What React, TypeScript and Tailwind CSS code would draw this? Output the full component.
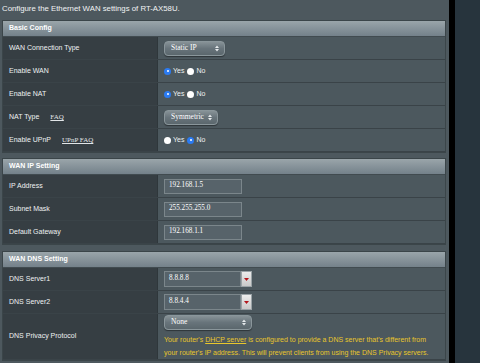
import React from 'react';

const sans = { fontFamily: '"Liberation Sans", Arial, sans-serif' };
const serif = { fontFamily: '"Liberation Serif", "Times New Roman", serif' };

function Arrows() {
    return (
        <svg width="4" height="7" viewBox="0 0 4 7" className="shrink-0">
            <path d="M0 3 L2 0.5 L4 3 Z" fill="#e6eaec" />
            <path d="M0 4 L2 6.5 L4 4 Z" fill="#e6eaec" />
        </svg>
    );
}

function Select({ label, width }: { label: string; width: string }) {
    return (
        <div
            className={`${width} h-[15px] flex items-center justify-between pl-[6px] pr-[5px] rounded-[4px] border border-[#8a969b] bg-gradient-to-b from-[#879297] via-[#68747b] to-[#5b676d] shadow-[0_1px_1px_rgba(0,0,0,0.4)]`}
        >
            <span className="text-[7.5px] text-white leading-none" style={serif}>{label}</span>
            <Arrows />
        </div>
    );
}

function Radio({ on }: { on: boolean }) {
    return on ? (
        <span className="w-[7px] h-[7px] rounded-full bg-[#2b7bf2] flex items-center justify-center">
            <span className="w-[2px] h-[2px] rounded-full bg-white" />
        </span>
    ) : (
        <span className="w-[7px] h-[7px] rounded-full bg-white" />
    );
}

function YesNo({ yes }: { yes: boolean }) {
    return (
        <div className="flex items-center text-[7px] text-[#eef1f2]" style={sans}>
            <Radio on={yes} />
            <span className="ml-[2px] mr-[3px]">Yes</span>
            <Radio on={!yes} />
            <span className="ml-[2px]">No</span>
        </div>
    );
}

function Input({ value }: { value: string }) {
    return (
        <div className="w-[78px] h-[15px] flex items-center pl-[4px] border border-[#7b868b] bg-[#57636a]">
            <span className="text-[7.2px] text-white leading-none" style={serif}>{value}</span>
        </div>
    );
}

function DnsInput({ value }: { value: string }) {
    return (
        <div className="flex h-[16px]">
            <div className="w-[77px] flex items-center pl-[4px] border border-[#7b868b] bg-[#57636a]">
                <span className="text-[7.2px] text-white leading-none" style={serif}>{value}</span>
            </div>
            <div className="w-[11px] flex items-center justify-center bg-gradient-to-b from-[#ececec] to-[#c9c9c9] border border-[#9aa3a7]">
                <svg width="5" height="3" viewBox="0 0 5 3">
                    <path d="M0 0 L5 0 L2.5 3 Z" fill="#b3161c" />
                </svg>
            </div>
        </div>
    );
}

function Row({ label, extra, children, tall }: { label: string; extra?: string; children: React.ReactNode; tall?: boolean }) {
    return (
        <div className={`flex ${tall ? 'h-[46px]' : 'h-[23px]'} border-b border-[#3a4348]`}>
            <div className="w-[155px] shrink-0 flex items-center pl-[6px] bg-[#363e43] border-r border-[#2f373b]">
                <span className="text-[7px] text-[#eef1f2]" style={sans}>{label}</span>
                {extra && (
                    <span className="text-[7px] text-[#e2e6e8] underline ml-[11px]" style={serif}>{extra}</span>
                )}
            </div>
            <div className="flex-1 flex flex-col justify-center pl-[6px] bg-[#4c585e]">{children}</div>
        </div>
    );
}

function Section({ title, children, className = '' }: { title: string; children: React.ReactNode; className?: string }) {
    return (
        <div className={`w-[444px] border border-[#3b4549] ${className}`}>
            <div className="h-[16px] flex items-center pl-[6px] bg-gradient-to-b from-[#9aa5aa] to-[#74818a] border-b border-[#414b50]">
                <span className="text-[7px] font-bold text-white" style={sans}>{title}</span>
            </div>
            {children}
        </div>
    );
}

export default function App() {
    return (
        <div className="w-[480px] h-[363px] flex overflow-hidden bg-[#27343d]">
            <div className="w-[449px] shrink-0 bg-[#4d585e] pl-[2px] pt-[3px]">
                <div className="h-[17px] text-[7.8px] text-[#f1f3f4] leading-[12px]" style={sans}>
                    Configure the Ethernet WAN settings of RT-AX58U.
                </div>

                <Section title="Basic Config">
                    <Row label="WAN Connection Type">
                        <Select label="Static IP" width="w-[61px]" />
                    </Row>
                    <Row label="Enable WAN"><YesNo yes /></Row>
                    <Row label="Enable NAT"><YesNo yes /></Row>
                    <Row label="NAT Type" extra="FAQ">
                        <Select label="Symmetric" width="w-[54px]" />
                    </Row>
                    <Row label="Enable UPnP" extra="UPnP FAQ"><YesNo yes={false} /></Row>
                </Section>

                <Section title="WAN IP Setting" className="mt-[5px]">
                    <Row label="IP Address"><Input value="192.168.1.5" /></Row>
                    <Row label="Subnet Mask"><Input value="255.255.255.0" /></Row>
                    <Row label="Default Gateway"><Input value="192.168.1.1" /></Row>
                </Section>

                <Section title="WAN DNS Setting" className="mt-[6px]">
                    <Row label="DNS Server1"><DnsInput value="8.8.8.8" /></Row>
                    <Row label="DNS Server2"><DnsInput value="8.8.4.4" /></Row>
                    <Row label="DNS Privacy Protocol" tall>
                        <Select label="None" width="w-[88px]" />
                        <div className="mt-[3px] text-[7px] leading-[13px] text-[#e8c62c] whitespace-nowrap" style={sans}>
                            <div className="flex">
                                <span>Your router's&nbsp;</span>
                                <span className="underline">DHCP server</span>
                                <span>&nbsp;is configured to provide a DNS server that's different from</span>
                            </div>
                            <div>your router's IP address. This will prevent clients from using the DNS Privacy servers.</div>
                        </div>
                    </Row>
                </Section>
            </div>
            <div className="w-[6px] shrink-0 bg-black" />
        </div>
    );
}
